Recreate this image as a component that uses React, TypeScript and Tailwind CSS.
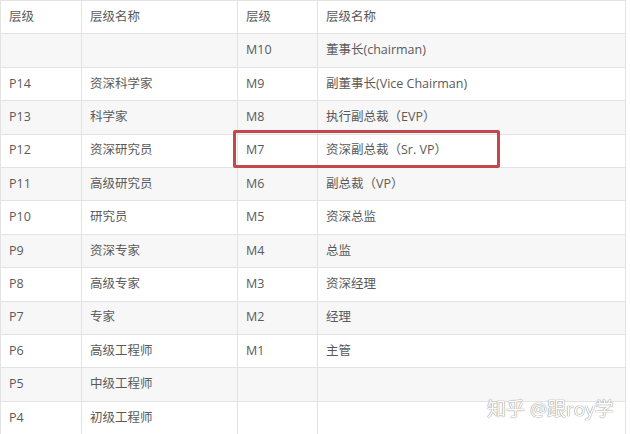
import React from "react";

const rows: [string, string, string, string][] = [
  ["", "", "M10", "董事长(chairman)"],
  ["P14", "资深科学家", "M9", "副董事长(Vice Chairman)"],
  ["P13", "科学家", "M8", "执行副总裁（EVP）"],
  ["P12", "资深研究员", "M7", "资深副总裁（Sr. VP）"],
  ["P11", "高级研究员", "M6", "副总裁（VP）"],
  ["P10", "研究员", "M5", "资深总监"],
  ["P9", "资深专家", "M4", "总监"],
  ["P8", "高级专家", "M3", "资深经理"],
  ["P7", "专家", "M2", "经理"],
  ["P6", "高级工程师", "M1", "主管"],
  ["P5", "中级工程师", "", ""],
  ["P4", "初级工程师", "", ""],
];

function Row({ cells, bg }: { cells: string[]; bg: string }) {
  return (
    <div className={`flex h-[33.4px] border-b border-[#e3e3e3] ${bg}`}>
      <div className="w-[81px] shrink-0 border-r border-[#e3e3e3] pl-[8px] flex items-center">{cells[0]}</div>
      <div className="w-[156px] shrink-0 border-r border-[#e3e3e3] pl-[8px] flex items-center">{cells[1]}</div>
      <div className="w-[80px] shrink-0 border-r border-[#e3e3e3] pl-[8px] flex items-center">{cells[2]}</div>
      <div className="flex-1 pl-[8px] flex items-center">{cells[3]}</div>
    </div>
  );
}

export default function App() {
  return (
    <div
      className="relative w-[630px] h-[434px] overflow-hidden bg-white text-[12.5px] text-[#5a5a5a]"
      style={{ fontFamily: '"Open Sans", "Noto Sans CJK SC", sans-serif' }}
    >
      <div className="w-[626px] border-t border-l border-r border-[#e3e3e3]">
        <Row cells={["层级", "层级名称", "层级", "层级名称"]} bg="bg-white" />
        {rows.map((r, i) => (
          <Row key={i} cells={r} bg={i % 2 === 0 ? "bg-[#f7f7f7]" : "bg-white"} />
        ))}
      </div>
      <div className="absolute left-[233px] top-[130px] w-[267px] h-[38px] border-[3px] border-[#c4484b] rounded-[2px]" />
      <div
        className="absolute left-[487px] top-[395px] text-[19px] text-white"
        style={{ textShadow: "0 0 1px #888, 0 0 1px #888" }}
      >
        知乎 @跟roy学
      </div>
    </div>
  );
}
